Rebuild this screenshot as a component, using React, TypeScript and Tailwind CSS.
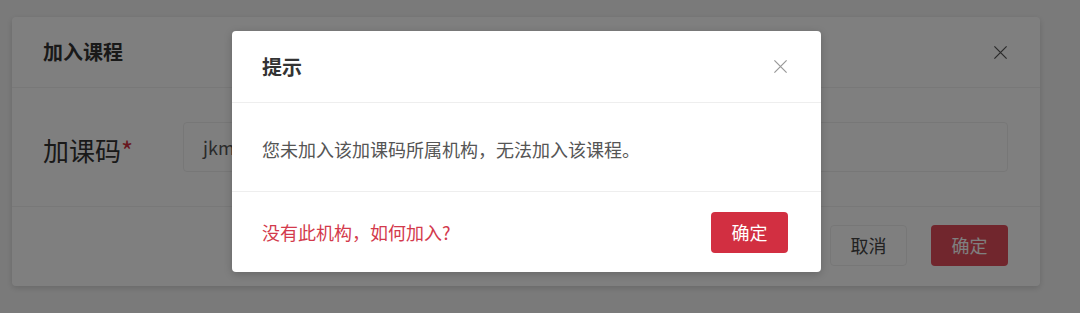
import * as React from "react";

const font = { fontFamily: '"Noto Sans CJK SC", "Noto Sans", sans-serif' };

function CloseIcon({ className }: { className?: string }) {
  return (
    <svg viewBox="0 0 16 16" className={className} fill="none" stroke="currentColor" strokeWidth={1.3}>
      <path d="M1.5 1.5 14.5 14.5M14.5 1.5 1.5 14.5" />
    </svg>
  );
}

export default function App() {
  return (
    <div className="relative h-[313px] w-[1080px] overflow-hidden bg-[#f5f5f5]" style={font}>
      {/* underlying dialog */}
      <div className="ml-[12px] pt-[17px]">
        <div className="flex h-[269px] w-[1028px] flex-col rounded-[4px] bg-white shadow-[0_2px_6px_rgba(0,0,0,0.15)]">
          <div className="flex h-[71px] items-center justify-between border-b border-[#f0f0f0] pl-[31px] pr-[32px]">
            <h2 className="text-[20px] font-bold text-[#333]">加入课程</h2>
            <CloseIcon className="size-[15px] text-[#555]" />
          </div>
          <div className="flex h-[119px] items-center border-b border-[#f0f0f0] pl-[31px] pr-[32px]">
            <label className="w-[140px] shrink-0 pt-[4px] text-[26px] text-[#333]">
              加课码<span className="text-[#d0303f]">*</span>
            </label>
            <div className="flex h-[50px] flex-1 items-center rounded-[4px] border border-[#eeeeee] px-[19px] text-[18px] text-[#555]">
              jkm
            </div>
          </div>
          <div className="flex flex-1 items-start justify-end gap-[24px] pt-[18px] pr-[32px]">
            <button className="h-[41px] w-[77px] rounded-[4px] border border-[#eeeeee] bg-white text-[18px] text-[#444]">
              取消
            </button>
            <button className="h-[41px] w-[77px] rounded-[4px] bg-[#e24c5a] text-[18px] text-white">
              确定
            </button>
          </div>
        </div>
      </div>

      {/* overlay + prompt */}
      <div className="absolute inset-0 bg-black/50 pl-[232px] pt-[31px]">
        <div className="flex h-[241px] w-[589px] flex-col rounded-[4px] bg-white shadow-[0_2px_8px_rgba(0,0,0,0.2)]">
          <div className="flex h-[72px] items-center justify-between border-b border-[#eeeeee] pl-[30px] pr-[33px]">
            <h3 className="pt-[1px] text-[20px] font-bold text-[#333]">提示</h3>
            <CloseIcon className="size-[15px] text-[#999]" />
          </div>
          <div className="flex h-[89px] items-center border-b border-[#eeeeee] px-[30px] pt-[4px] text-[18px] text-[#555]">
            您未加入该加课码所属机构，无法加入该课程。
          </div>
          <div className="flex flex-1 items-center justify-between pl-[30px] pr-[33px]">
            <span className="text-[18px] text-[#d33a4c]">没有此机构，如何加入?</span>
            <button className="h-[41px] w-[77px] rounded-[4px] bg-[#d22f41] text-[18px] text-white">
              确定
            </button>
          </div>
        </div>
      </div>
    </div>
  );
}
